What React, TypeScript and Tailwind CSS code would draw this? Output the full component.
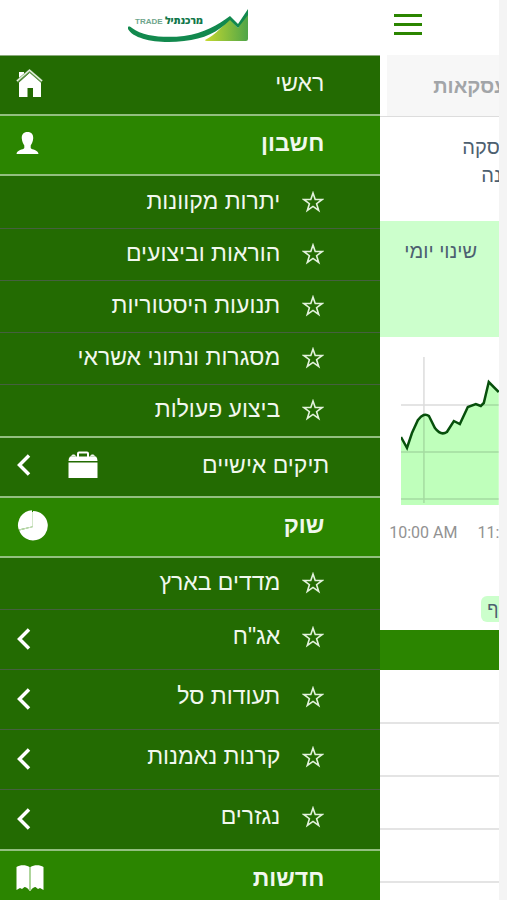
import { useState } from 'react'
import type { ReactNode } from 'react'

interface MenuItem {
  label: string
  expandable?: boolean
}

const accountItems: MenuItem[] = [
  { label: 'יתרות מקוונות' },
  { label: 'הוראות וביצועים' },
  { label: 'תנועות היסטוריות' },
  { label: 'מסגרות ונתוני אשראי' },
  { label: 'ביצוע פעולות' },
]

const marketItems: MenuItem[] = [
  { label: 'מדדים בארץ' },
  { label: 'אג"ח', expandable: true },
  { label: 'תעודות סל', expandable: true },
  { label: 'קרנות נאמנות', expandable: true },
  { label: 'נגזרים', expandable: true },
]

function Logo() {
  return (
    <svg className="h-9 w-[124px]" viewBox="0 0 124 36" direction="ltr" role="img" aria-label="מרכנתיל TRADE">
      <defs>
        <linearGradient id="hill" x1="0" y1="0" x2="1" y2="0">
          <stop offset="0" stopColor="#c6d92f" />
          <stop offset="1" stopColor="#4fa548" />
        </linearGradient>
      </defs>
      <path d="M77 32 C88 27 96 16 102 11 L110 20 L120 3 V31 Q120 33 118 33 H79 Q77 33 77 32 Z" fill="url(#hill)" />
      <path
        d="M0 19 C1 18 3 19 4 20 C16 29 38 30 56 28 C76 25 90 17 102 8 L110 16 L120 1 V7 L110 20 L102 12 C90 24 76 31 56 33 C32 36 6 32 0 21 Z"
        fill="#12894e"
      />
      <text x="7" y="16" fontSize="8" fontWeight="700" fill="#6fa58c" fontFamily="Liberation Sans, sans-serif">TRADE</text>
      <text x="37" y="16" fontSize="10" fontWeight="800" fill="#12774a" fontFamily="Open Sans, sans-serif">מרכנתיל</text>
    </svg>
  )
}

function HomeIcon() {
  return (
    <svg className="h-7 w-7" viewBox="0 0 28 28" fill="#fff" aria-hidden="true">
      <path d="M3 3h5v4l-5 5z" />
      <path d="M14 3.5 25 13.5V28H17V19H11.5V28H3V13.5Z" />
      <path d="M1 12.5 13.5 1.8 26 12.5" fill="none" stroke="#5f9548" strokeWidth="3" />
      <path d="M1 12 13.5 1.3 26 12" fill="none" stroke="#e4f0de" strokeWidth="1.5" />
    </svg>
  )
}

function UserIcon() {
  return (
    <svg className="h-6 w-6" viewBox="0 0 24 24" fill="#fff" aria-hidden="true">
      <path d="M11.5 1C15.5 1 17.5 3.500 17.200 7.500C17 11 15.500 13 14.700 14.500V17C16 19 22 18.500 22.500 23H.5C1 18.500 7 19 8.300 17V14.500C7.500 13 6 11 5.800 7.500C5.500 3.500 7.500 1 11.500 1Z" />
    </svg>
  )
}

function BriefcaseIcon() {
  return (
    <svg className="h-7 w-[30px]" viewBox="0 0 30 28" fill="#fff" aria-hidden="true">
      <path d="M10 6V2.500Q10 1.500 11 1.500H19Q20 1.500 20 2.500V6" fill="none" stroke="#fff" strokeWidth="2" />
      <path d="M2 5.500H28Q29.500 7 29.500 10H.5Q.5 7 2 5.500Z" />
      <path d="M.5 11.500H29.500V27H.5Z" />
      <path d="M3.500 5.500a2 1.600 0 0 1 4 0M22.500 5.500a2 1.600 0 0 1 4 0" stroke="#fff" />
    </svg>
  )
}

function PieIcon() {
  return (
    <svg className="h-8 w-8" viewBox="0 0 32 32" aria-hidden="true">
      <path d="M16 1.200V17.500L2.600 20.500A15 15 0 0 1 16 1.200Z" fill="#fff" />
      <path d="M17 2A14.700 14.700 0 1 1 3.200 21.500L17 18Z" fill="#fff" />
      <path d="M16.500 3V17.800L3 21" fill="none" stroke="#d3e7ca" strokeWidth="1" />
    </svg>
  )
}

function BookIcon() {
  return (
    <svg className="h-7 w-7" viewBox="0 0 28 28" aria-hidden="true">
      <path d="M.5 3C4 .5 10 .5 13.500 3V27C12 24 10 23 8.500 23L6 25L4 24L.5 26Z" fill="#fff" />
      <path d="M27.500 3C24 .5 18 .5 14.500 3V27C16 24 18 23 19.500 23L22 25L24 24L27.500 26Z" fill="#fff" />
      <path d="M14 3V27" stroke="#b7dba6" strokeWidth="1.500" />
    </svg>
  )
}

function StarIcon() {
  return (
    <svg className="h-[22px] w-[22px] shrink-0" viewBox="0 0 22 22" fill="none" stroke="#e3f2dc" strokeWidth="1.600" aria-hidden="true">
      <path d="M11 2 13.200 8.500H20.200L14.600 12.700 16.700 19.500 11 15.400 5.300 19.500 7.400 12.700 1.800 8.500H8.800Z" />
    </svg>
  )
}

function ChevronIcon() {
  return (
    <svg className="h-6 w-4" viewBox="0 0 16 24" fill="none" stroke="#fff" strokeWidth="3.500" aria-hidden="true">
      <path d="M13 2.500 3.500 12 13 21.500" />
    </svg>
  )
}

function SectionHeader({ label, icon }: { label: string; icon: ReactNode }) {
  return (
    <button className="flex h-[60px] w-full shrink-0 items-center justify-between border-b-2 border-[#93bf80] bg-[#2b8500] pr-14 pl-4 pb-1 text-[23px] font-bold">
      <span>{label}</span>
      {icon}
    </button>
  )
}

function MenuList({ items }: { items: MenuItem[] }) {
  return (
    <ul className="shrink-0 border-b-2 border-[#93bf80]">
      {items.map((item) => (
        <li key={item.label} className="border-b border-[#45603f] last:border-b-0">
          <button
            className={`flex w-full items-center gap-[22px] pr-14 pl-4 text-[23px] ${item.expandable ? 'h-[59px] pb-1.5' : 'h-[51px] pb-0.5'}`}
          >
            <StarIcon />
            <span>{item.label}</span>
            {item.expandable && (
              <span className="mr-auto pt-1">
                <ChevronIcon />
              </span>
            )}
          </button>
        </li>
      ))}
    </ul>
  )
}

function Drawer() {
  return (
    <nav dir="rtl" className="flex w-3/4 shrink-0 flex-col overflow-hidden bg-[#236b02] text-[#f1f8ee]">
      <div className="flex h-14 shrink-0 items-start justify-center border-b border-[#8bab7c] bg-white pt-2">
        <Logo />
      </div>
      <button className="flex h-[60px] w-full shrink-0 items-center justify-between border-b-2 border-[#93bf80] pr-14 pl-4 pb-1 text-[23px]">
        <span>ראשי</span>
        <HomeIcon />
      </button>
      <SectionHeader label="חשבון" icon={<UserIcon />} />
      <div className="shrink-0 pt-px">
        <MenuList items={accountItems} />
      </div>
      <button className="flex h-[60px] w-full shrink-0 items-center border-b-2 border-[#93bf80] pr-[51px] pl-4 pb-1 text-[23px]">
        <span className="flex-1 text-right">תיקים אישיים</span>
        <span className="flex items-center gap-9">
          <BriefcaseIcon />
          <ChevronIcon />
        </span>
      </button>
      <SectionHeader label="שוק" icon={<PieIcon />} />
      <MenuList items={marketItems} />
      <SectionHeader label="חדשות" icon={<BookIcon />} />
    </nav>
  )
}

function DailyChart() {
  const line =
    'M0 80 L6 91 L11 76 L17 63 Q23 55 28 59 L34 71 Q40 79 46 75 L53 64 L59 67 L67 50 L75 47 L80 49 L83 46 L88 25 L98 35'
  return (
    <svg className="h-[148px] w-full" viewBox="0 0 98 148" preserveAspectRatio="none" role="img" aria-label="שינוי יומי">
      <path d={`${line} V148 H0 Z`} fill="#bfffbb" />
      <path d="M23 0V146M0 48H98M0 95H98M0 142H98" stroke="#000" strokeOpacity=".14" strokeWidth="1.500" fill="none" />
      <path d={line} stroke="#07500c" strokeWidth="2.500" fill="none" />
    </svg>
  )
}

function MarketPage({ onMenu }: { onMenu: () => void }) {
  return (
    <main className="flex min-w-0 flex-1 flex-col overflow-hidden border-r-8 border-[#f4f4f4] bg-white text-xl whitespace-nowrap text-[#4d6070]">
      <header className="flex h-[55px] shrink-0 items-start pt-3.5 pl-3.5">
        <button aria-label="תפריט" className="flex w-7 flex-col gap-1.5" onClick={onMenu}>
          <span className="h-[3px] bg-[#2b8500]" />
          <span className="h-[3px] bg-[#2b8500]" />
          <span className="h-[3px] bg-[#2b8500]" />
        </button>
      </header>
      <div className="shrink-0 border-b border-[#ddd] pl-[7px]">
        <button className="flex h-[61px] w-full items-center bg-[#f7f7f7] pl-[46px] font-semibold text-[#a2a5a8]">
          עסקאות
        </button>
      </div>
      <div className="h-[104px] shrink-0 pt-4">
        <p className="pl-[82px] leading-7">עסקה</p>
        <p className="pl-[101px] leading-7">אחרונה</p>
      </div>
      <div className="h-[116px] shrink-0 bg-[#ccffcc] pt-4 pl-6">
        <p className="leading-7">שינוי יומי</p>
      </div>
      <div className="shrink-0 pt-5 pl-[21px]">
        <DailyChart />
      </div>
      <div className="flex shrink-0 gap-5 pt-3.5 pl-[9px] font-['Roboto',sans-serif] text-base leading-7 text-[#929292]">
        <span>10:00 AM</span>
        <span>11:00 AM</span>
      </div>
      <div className="flex h-[83px] shrink-0 items-end pb-2 pl-[101px]">
        <button className="h-[26px] rounded-md bg-[#ccffcc] px-1.5 text-lg leading-6">רציף</button>
      </div>
      <div className="h-10 shrink-0 bg-[#2b8500]" />
      <ul className="pt-px">
        {[0, 1, 2, 3, 4].map((row) => (
          <li key={row} className="h-[53px] border-b-2 border-[#e4e4e4]" />
        ))}
      </ul>
    </main>
  )
}

export default function App() {
  const [open, setOpen] = useState(true)

  return (
    <div className="flex h-screen overflow-hidden bg-white font-['Liberation_Sans',sans-serif]">
      {open && <Drawer />}
      <MarketPage onMenu={() => setOpen(!open)} />
    </div>
  )
}
